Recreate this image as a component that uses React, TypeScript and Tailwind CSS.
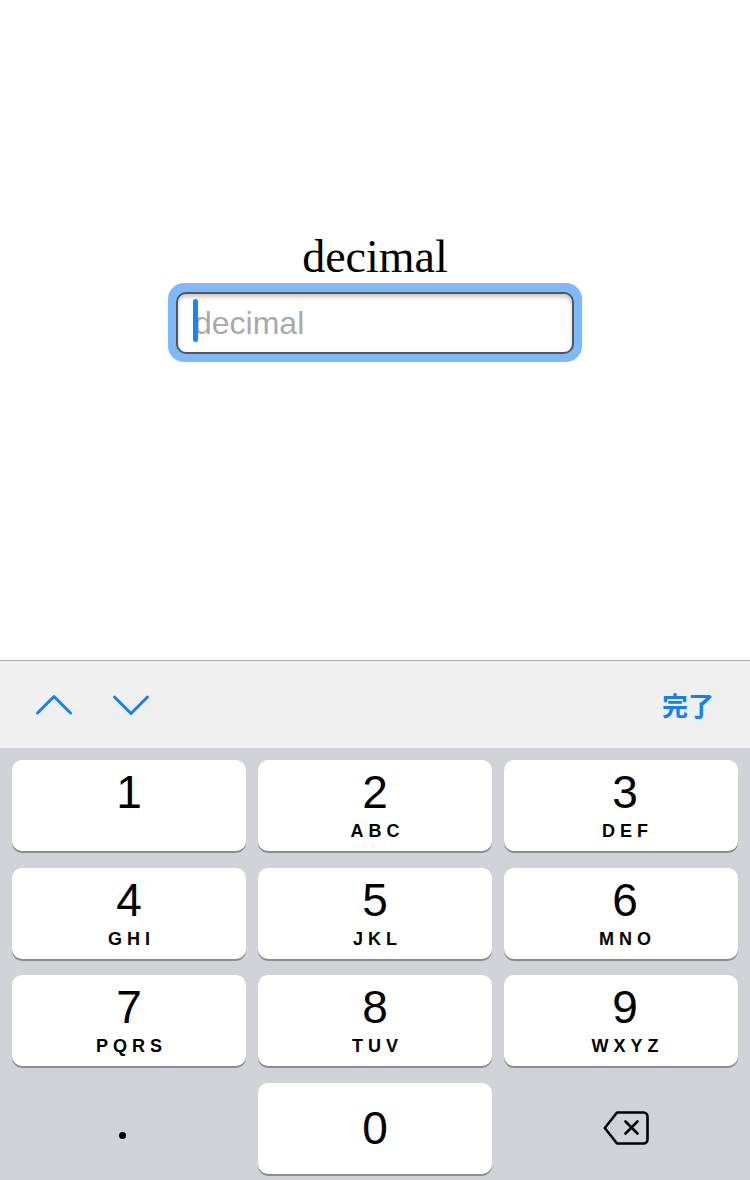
import React from 'react';

const KEYS = [
  { d: '1', l: '' },
  { d: '2', l: 'ABC' },
  { d: '3', l: 'DEF' },
  { d: '4', l: 'GHI' },
  { d: '5', l: 'JKL' },
  { d: '6', l: 'MNO' },
  { d: '7', l: 'PQRS' },
  { d: '8', l: 'TUV' },
  { d: '9', l: 'WXYZ' },
];

const Key = ({ d, l, right }: { d: string; l: string; right?: boolean }) => (
  <div className={`h-[91px] rounded-[10px] bg-white shadow-[0_2px_0_#8b8c8f] flex flex-col items-center pt-[9px] text-black ${right ? 'pl-[8px]' : ''}`}>
    <span className="text-[46px] leading-[46px] font-['Liberation_Sans',Arial,sans-serif]">{d}</span>
    <span className="mt-[7px] h-[18px] text-[18px] leading-[18px] font-bold tracking-[5px] pl-[5px] font-['Liberation_Sans',Arial,sans-serif]">{l}</span>
  </div>
);

const Chevron = ({ down }: { down?: boolean }) => (
  <svg width="40" height="24" viewBox="0 0 40 24" fill="none">
    <path
      d={down ? 'M3.5 4 L20 20.5 L36.5 4' : 'M3.5 20 L20 3.5 L36.5 20'}
      stroke="#157efb"
      strokeWidth="3"
      strokeLinecap="round"
      strokeLinejoin="round"
    />
  </svg>
);

export default function App() {
  return (
    <div className="w-[750px] h-[1180px] flex flex-col bg-white overflow-hidden">
      {/* page */}
      <div className="h-[660px] flex flex-col items-center pt-[231px]">
        <h1 className="text-[46px] leading-[52px] text-black font-['Liberation_Serif','Times_New_Roman',serif]">decimal</h1>
        <div className="w-[414px] h-[79px] rounded-[16px] bg-[#7db9fb] pt-[9px] px-[8px] pb-[8px]">
          <div className="relative h-full rounded-[10px] border-2 border-[#555555] bg-white shadow-[inset_0_3px_4px_rgba(0,0,0,0.22)] flex items-center pl-[16px]">
            <span className="text-[32px] text-[#a9a9a9] font-['Liberation_Sans',Arial,sans-serif]">decimal</span>
            <span className="absolute left-[15px] top-[5px] w-[5px] h-[43px] rounded-full bg-[#1a82fb]" />
          </div>
        </div>
      </div>

      {/* toolbar */}
      <div className="h-[88px] border-t border-[#a8a8a8] bg-[#f0f0f0] flex items-center pl-[34px] pr-[36px]">
        <Chevron />
        <div className="ml-[37px]">
          <Chevron down />
        </div>
        <span className="ml-auto text-[26px] font-semibold text-[#157efb] font-['Noto_Sans_CJK_JP',sans-serif]">完了</span>
      </div>

      {/* keypad */}
      <div className="flex-1 bg-[#d1d3d9] px-[12px] pt-[12px] grid grid-cols-3 gap-x-[12px] gap-y-[16.67px] content-start">
        {KEYS.map((k, i) => (
          <Key key={k.d} d={k.d} l={k.l} right={i % 3 === 2} />
        ))}
        <div className="h-[91px] flex justify-center pt-[49px] pr-[14px]">
          <span className="w-[7px] h-[7px] rounded-full bg-black" />
        </div>
        <div className="h-[91px] rounded-[10px] bg-white shadow-[0_2px_0_#8b8c8f] flex items-center justify-center">
          <span className="text-[46px] leading-[46px] text-black font-['Liberation_Sans',Arial,sans-serif]">0</span>
        </div>
        <div className="h-[91px] flex items-center justify-center pl-[10px]">
          <svg width="46" height="34" viewBox="0 0 46 34" fill="none">
            <path
              d="M14 1.5 H40.5 a4 4 0 0 1 4 4 V28.5 a4 4 0 0 1 -4 4 H14 L1.8 17 Z"
              stroke="#000"
              strokeWidth="2.6"
              strokeLinejoin="round"
            />
            <path d="M22.5 10.5 L34.5 22.5 M34.5 10.5 L22.5 22.5" stroke="#000" strokeWidth="2.6" strokeLinecap="round" />
          </svg>
        </div>
      </div>
    </div>
  );
}
